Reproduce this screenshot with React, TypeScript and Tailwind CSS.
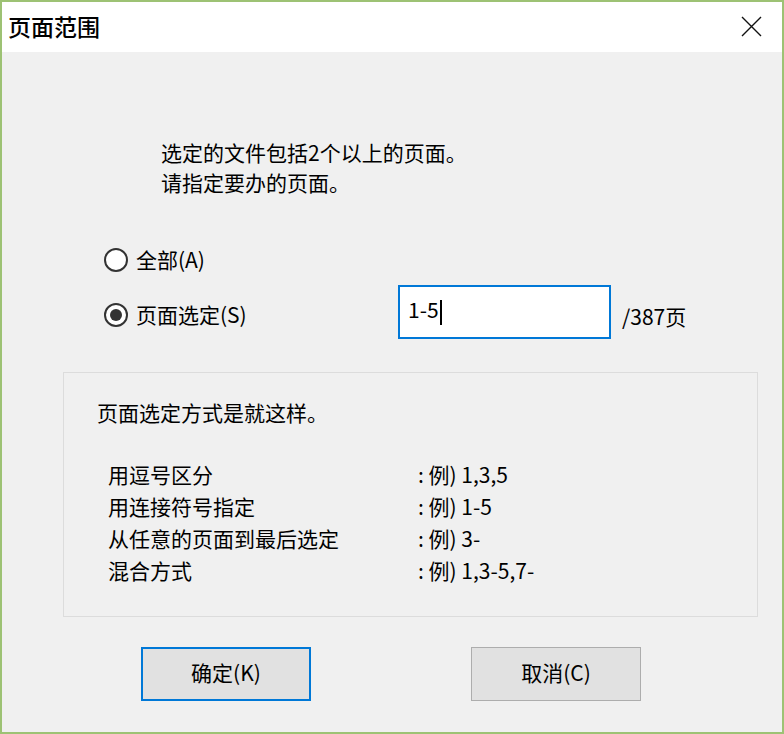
const font = { fontFamily: '"Noto Sans CJK SC", "Noto Sans", sans-serif' };

function Radio({ checked }: { checked?: boolean }) {
  return (
    <span className="w-[24px] h-[24px] rounded-full border-2 border-[#333333] bg-white flex items-center justify-center shrink-0">
      {checked && <span className="w-[12px] h-[12px] rounded-full bg-[#333333]" />}
    </span>
  );
}

const rows = [
  ['用逗号区分', ': 例) 1,3,5'],
  ['用连接符号指定', ': 例) 1-5'],
  ['从任意的页面到最后选定', ': 例) 3-'],
  ['混合方式', ': 例) 1,3-5,7-'],
];

export default function App() {
  return (
    <div
      className="w-[784px] h-[734px] border-2 border-[#9dc274] bg-[#f0f0f0] flex flex-col text-black overflow-hidden"
      style={font}
    >
      {/* title bar */}
      <div className="h-[50px] bg-white flex items-center justify-between pl-[6px] pr-[20px] shrink-0">
        <span className="text-[23px] leading-none font-medium pb-[2px]">页面范围</span>
        <svg width="21" height="21" viewBox="0 0 21 21" className="mt-[-2px]">
          <path d="M1 1 L20 20 M20 1 L1 20" stroke="#111" strokeWidth="1.4" fill="none" />
        </svg>
      </div>

      {/* body */}
      <div className="flex flex-col pl-[61px]">
        <div className="ml-[98px] mt-[85px] text-[21px] leading-[30px]">
          <div>选定的文件包括2个以上的页面。</div>
          <div>请指定要办的页面。</div>
        </div>

        <div className="ml-[41px] mt-[48px] h-[30px] flex items-center gap-[8px] text-[21px]">
          <Radio />
          <span>全部(A)</span>
        </div>

        <div className="ml-[41px] mt-[10px] flex items-start text-[21px]">
          <div className="flex items-center gap-[8px] w-[294px] mt-[15px] h-[30px]">
            <Radio checked />
            <span>页面选定(S)</span>
          </div>
          <div className="w-[213px] h-[54px] border-2 border-[#0078d7] bg-white flex items-center pl-[8px] pb-[4px]">
            <span className="text-[21px]">1-5</span>
            <span className="w-[2px] h-[25px] bg-black ml-[1px] mt-[4px]" />
          </div>
          <span className="ml-[11px] mt-[16px] leading-[30px]">/387页</span>
        </div>

        <div className="mt-[33px] w-[695px] h-[245px] border border-[#dcdcdc] flex flex-col pl-[33px] pt-[24px] text-[21px]">
          <div className="leading-[30px]">页面选定方式是就这样。</div>
          <div className="mt-[31px] ml-[11px] flex flex-col leading-[32px]">
            {rows.map(([a, b]) => (
              <div key={a} className="flex">
                <span className="w-[310px]">{a}</span>
                <span>{b}</span>
              </div>
            ))}
          </div>
        </div>

        <div className="mt-[30px] ml-[78px] flex gap-[160px] text-[21px]">
          <div className="w-[170px] h-[54px] bg-[#e1e1e1] border-2 border-[#0078d7] flex items-center justify-center pb-[2px]">
            确定(K)
          </div>
          <div className="w-[170px] h-[54px] bg-[#e1e1e1] border border-[#adadad] flex items-center justify-center pb-[2px]">
            取消(C)
          </div>
        </div>
      </div>
    </div>
  );
}
